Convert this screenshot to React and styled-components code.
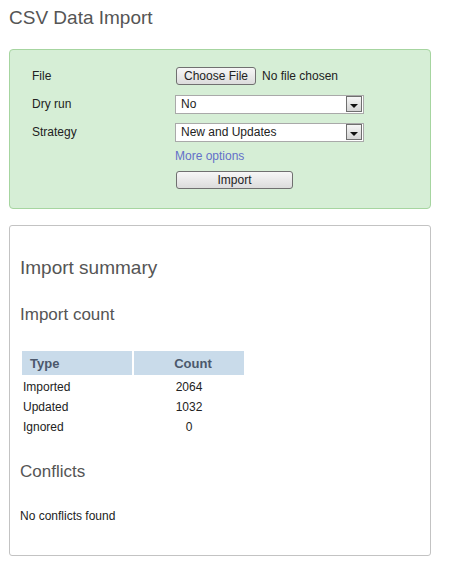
import React from "react";
import styled, { createGlobalStyle } from "styled-components";

const GlobalStyle = createGlobalStyle`
  body {
    margin: 0;
    background: #ffffff;
    font-family: "Liberation Sans", Arial, sans-serif;
    font-size: 12px;
    color: #222222;
  }
`;

const Page = styled.div`
  width: 422px;
  padding: 7px 0 20px 9px;
`;

const Title = styled.h1`
  margin: 0 0 20px;
  font-size: 19px;
  line-height: 22px;
  font-weight: normal;
  color: #555555;
`;

const FormPanel = styled.div`
  display: grid;
  grid-template-columns: 143px 1fr;
  padding: 12px 0 16px 22px;
  background: #d6eed6;
  border: 1px solid #a6d5a0;
  border-radius: 4px;
`;

const Label = styled.div`
  display: flex;
  align-items: center;
  height: ${(p) => p.h || 28}px;
  color: #222222;
`;

const Field = styled.div`
  display: flex;
  align-items: ${(p) => (p.top ? "flex-start" : "center")};
  height: ${(p) => p.h || 28}px;
  padding-top: ${(p) => p.top || 0}px;
  box-sizing: border-box;
`;

const Button = styled.button`
  box-sizing: border-box;
  width: ${(p) => p.w}px;
  height: 18px;
  margin: 0 0 0 1px;
  padding: 0;
  border: 1px solid #707070;
  border-radius: 3px;
  background: linear-gradient(#f7f7f7, #dcdcdc);
  font-family: "Liberation Sans", Arial, sans-serif;
  font-size: 12px;
  color: #222222;
  text-align: center;
`;

const FileName = styled.span`
  margin-left: 6px;
`;

const Select = styled.div`
  box-sizing: border-box;
  display: flex;
  align-items: center;
  justify-content: space-between;
  width: 189px;
  height: 19px;
  padding: 0 1px 0 5px;
  background: #ffffff;
  border: 1px solid #a9a9a9;
`;

const Arrow = styled.span`
  box-sizing: border-box;
  display: flex;
  align-items: center;
  justify-content: center;
  width: 16px;
  height: 16px;
  padding-top: 3px;
  border: 1px solid #6f6f6f;
  background: linear-gradient(#f6f6f6, #d4d4d4);

  &::after {
    content: "";
    border-left: 4px solid transparent;
    border-right: 4px solid transparent;
    border-top: 4px solid #111111;
  }
`;

const Link = styled.a`
  color: #6370c9;
  text-decoration: none;
`;

const SummaryPanel = styled.div`
  margin-top: 16px;
  padding: 0 10px 31px;
  border: 1px solid #c3c3c3;
  border-radius: 3px;
`;

const Heading = styled.h2`
  margin: ${(p) => p.mt}px 0 0;
  font-size: ${(p) => p.size}px;
  line-height: ${(p) => p.lh}px;
  font-weight: normal;
  color: #555555;
`;

const Table = styled.table`
  margin: 24px 0 0 0;
  border-collapse: separate;
  border-spacing: 2px;
  font-size: 12px;
`;

const Th = styled.th`
  width: 110px;
  height: 24px;
  padding: 0 0 0 8px;
  box-sizing: border-box;
  background: #c9dbea;
  color: #4b586c;
  font-size: 13px;
  font-weight: bold;
  text-align: ${(p) => (p.center ? "center" : "left")};
`;

const Td = styled.td`
  height: 17px;
  padding: 1px 0 0 ${(p) => (p.center ? 0 : 1)}px;
  color: #222222;
  text-align: ${(p) => (p.center ? "center" : "left")};
`;

const Text = styled.p`
  margin: 26px 0 0;
  line-height: 16px;
  color: #222222;
`;

const counts = [
  ["Imported", 2064],
  ["Updated", 1032],
  ["Ignored", 0],
];

const App = () => {
  return (
    <Page>
      <GlobalStyle />
      <Title>CSV Data Import</Title>
      <FormPanel>
        <Label>File</Label>
        <Field>
          <Button w={80}>Choose File</Button>
          <FileName>No file chosen</FileName>
        </Field>

        <Label>Dry run</Label>
        <Field>
          <Select>
            <span>No</span>
            <Arrow />
          </Select>
        </Field>

        <Label>Strategy</Label>
        <Field>
          <Select>
            <span>New and Updates</span>
            <Arrow />
          </Select>
        </Field>

        <Label h={20} />
        <Field h={20}>
          <Link href="#">More options</Link>
        </Field>

        <Label h={26} />
        <Field h={26} top={5}>
          <Button w={117}>Import</Button>
        </Field>
      </FormPanel>

      <SummaryPanel>
        <Heading mt={31} size={19} lh={22}>
          Import summary
        </Heading>
        <Heading mt={26} size={17} lh={20}>
          Import count
        </Heading>
        <Table>
          <thead>
            <tr>
              <Th>Type</Th>
              <Th center>Count</Th>
            </tr>
          </thead>
          <tbody>
            {counts.map(([type, n]) => (
              <tr key={type}>
                <Td>{type}</Td>
                <Td center>{n}</Td>
              </tr>
            ))}
          </tbody>
        </Table>
        <Heading mt={25} size={17} lh={20}>
          Conflicts
        </Heading>
        <Text>No conflicts found</Text>
      </SummaryPanel>
    </Page>
  );
};

export default App;
